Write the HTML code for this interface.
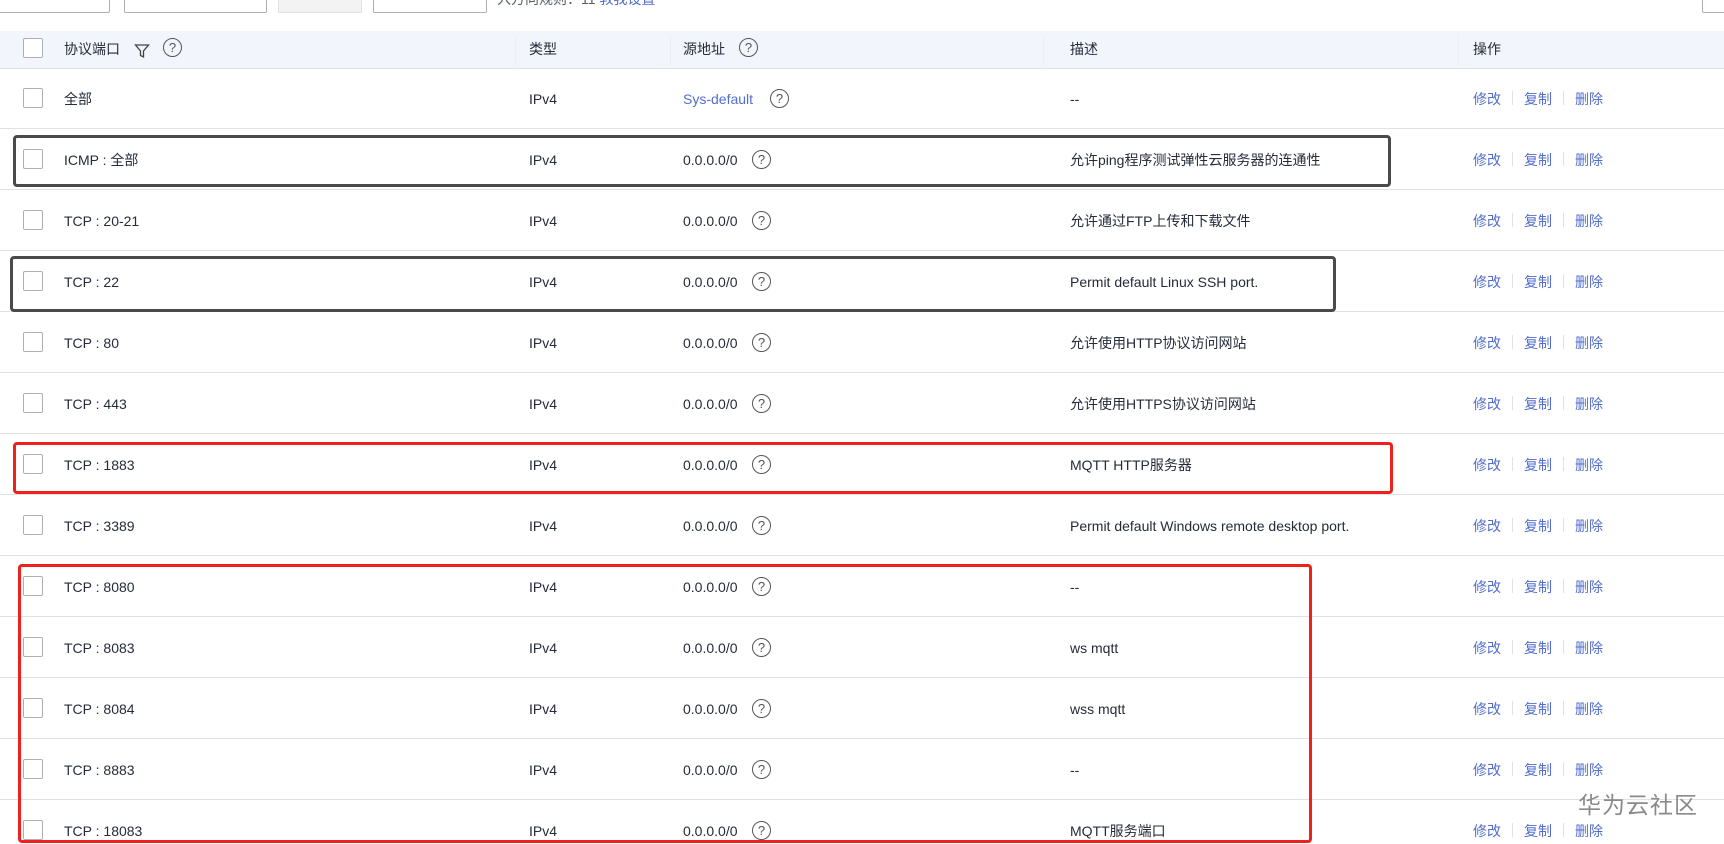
<!DOCTYPE html>
<html><head><meta charset="utf-8"><style>
body{margin:0;width:1724px;height:844px;overflow:hidden;background:#fff;font-family:"Liberation Sans","Noto Sans CJK SC",sans-serif;font-size:14px;color:#252b3a;position:relative}
.a{position:absolute;white-space:nowrap;line-height:20px;height:20px}
.btn{position:absolute;top:-4px;height:15px;border:1px solid #adb0b8;border-radius:2px;background:#fff}
.hdr{position:absolute;left:0;top:31px;width:1724px;height:37px;background:#f2f5fc;border-bottom:1px solid #dfe1e6}
.cb{position:absolute;width:18px;height:18px;border:1px solid #adb0b8;border-radius:2px;background:#fff}
.line{position:absolute;left:0;width:1724px;height:1px;background:#dfe1e6}
.q{position:absolute;width:17px;height:17px;border:1.3px solid #555;border-radius:50%;font-size:13px;line-height:17px;text-align:center;color:#555}
.lk{color:#526ecc}
.sep{position:absolute;width:1px;height:14px;background:#dfe1e6}
.box{position:absolute;border:3px solid #4a4a4a;border-radius:4px}
.red{border-color:#f0201f}
</style></head><body>
<div class="btn" style="left:-2px;width:110px"></div>
<div class="btn" style="left:124px;width:141px"></div>
<div class="btn" style="left:278px;width:82px;background:#f3f3f3;border-color:#dfe1e6"></div>
<div class="btn" style="left:373px;width:112px"></div>
<div class="a" style="left:497px;top:-11px;color:#575d6c">入方向规则：11 <span class="lk">教我设置</span></div>
<div class="btn" style="left:1702px;width:30px"></div>

<div class="hdr"></div>
<div class="a" style="left:515px;top:35px;width:1px;height:30px;background:#eceef2"></div>
<div class="a" style="left:670px;top:35px;width:1px;height:30px;background:#eceef2"></div>
<div class="a" style="left:1043px;top:35px;width:1px;height:30px;background:#eceef2"></div>
<div class="a" style="left:1458px;top:35px;width:1px;height:30px;background:#eceef2"></div>
<div class="cb" style="left:23px;top:38px"></div>
<div class="a" style="left:64px;top:39px">协议端口</div>
<svg class="a" style="left:134px;top:41px" width="16" height="16" viewBox="0 0 16 16"><path d="M1.5 2h13l-5 6v6l-3-1.5V8z" fill="none" stroke="#444" stroke-width="1.3"/></svg>
<div class="q" style="left:163px;top:38px">?</div>
<div class="a" style="left:529px;top:39px">类型</div>
<div class="a" style="left:683px;top:39px">源地址</div>
<div class="q" style="left:739px;top:38px">?</div>
<div class="a" style="left:1070px;top:39px">描述</div>
<div class="a" style="left:1473px;top:39px">操作</div>

<div id="rows"></div>
<script>
var d=[["全部","Sys-default","--"],["ICMP : 全部","0.0.0.0/0","允许ping程序测试弹性云服务器的连通性"],["TCP : 20-21","0.0.0.0/0","允许通过FTP上传和下载文件"],["TCP : 22","0.0.0.0/0","Permit default Linux SSH port."],["TCP : 80","0.0.0.0/0","允许使用HTTP协议访问网站"],["TCP : 443","0.0.0.0/0","允许使用HTTPS协议访问网站"],["TCP : 1883","0.0.0.0/0","MQTT HTTP服务器"],["TCP : 3389","0.0.0.0/0","Permit default Windows remote desktop port."],["TCP : 8080","0.0.0.0/0","--"],["TCP : 8083","0.0.0.0/0","ws mqtt"],["TCP : 8084","0.0.0.0/0","wss mqtt"],["TCP : 8883","0.0.0.0/0","--"],["TCP : 18083","0.0.0.0/0","MQTT服务端口"]];
var h="";
d.forEach(function(r,i){var c=98+61*i,t=c-9;
h+='<div class="cb" style="left:23px;top:'+(c-10)+'px"></div>';
h+='<div class="a" style="left:64px;top:'+t+'px">'+r[0]+'</div>';
h+='<div class="a" style="left:529px;top:'+t+'px">IPv4</div>';
var sd=r[1]=="Sys-default";
h+='<div class="a'+(sd?' lk':'')+'" style="left:683px;top:'+t+'px">'+r[1]+'</div>';
h+='<div class="q" style="left:'+(sd?770:752)+'px;top:'+(c-9)+'px">?</div>';
h+='<div class="a" style="left:1070px;top:'+t+'px">'+r[2]+'</div>';
h+='<div class="a lk" style="left:1473px;top:'+t+'px">修改</div><div class="sep" style="left:1512px;top:'+(c-7)+'px"></div>';
h+='<div class="a lk" style="left:1524px;top:'+t+'px">复制</div><div class="sep" style="left:1563px;top:'+(c-7)+'px"></div>';
h+='<div class="a lk" style="left:1575px;top:'+t+'px">删除</div>';
if(i<12)h+='<div class="line" style="top:'+(c+30)+'px"></div>';});
document.getElementById("rows").innerHTML=h;
</script>
<div class="box" style="left:13px;top:135px;width:1372px;height:46px"></div>
<div class="box" style="left:10px;top:256px;width:1320px;height:50px"></div>
<div class="box red" style="left:13px;top:442px;width:1374px;height:46px"></div>
<div class="box red" style="left:18px;top:564px;width:1288px;height:273px"></div>
<div class="a" style="left:1578px;top:792px;font-size:23px;line-height:26px;height:26px;color:#8a8a8a;letter-spacing:1px">华为云社区</div>
</body></html>
